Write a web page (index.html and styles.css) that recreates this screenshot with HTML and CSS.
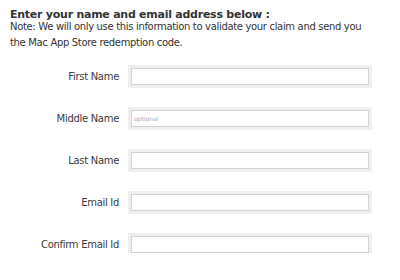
FILE: index.html
```html
<!DOCTYPE html>
<html>
<head>
<meta charset="utf-8">
<link rel="stylesheet" href="styles.css">
</head>
<body>
<div class="page">
  <h1 class="title">Enter your name and email address below :</h1>
  <p class="note">Note: We will only use this information to validate your claim and send you the Mac App Store redemption code.</p>
  <form class="form">
    <div class="row"><label class="label">First Name</label><input class="field" type="text"></div>
    <div class="row"><label class="label">Middle Name</label><input class="field" type="text" placeholder="optional"></div>
    <div class="row"><label class="label">Last Name</label><input class="field" type="text"></div>
    <div class="row"><label class="label">Email Id</label><input class="field" type="text"></div>
    <div class="row"><label class="label">Confirm Email Id</label><input class="field" type="text"></div>
  </form>
</div>
</body>
</html>
```
FILE: styles.css
```css
html, body {
  margin: 0;
  padding: 0;
  background: #ffffff;
}
.page {
  padding: 9px 0 0 10px;
  font-family: "DejaVu Sans", Verdana, sans-serif;
  color: #333333;
}
.title {
  margin: 0;
  font-size: 11px;
  line-height: 12px;
  font-weight: bold;
  letter-spacing: -0.25px;
  color: #333333;
}
.note {
  margin: -2px 0 0 0;
  font-size: 10px;
  line-height: 16px;
  letter-spacing: -0.33px;
  color: #333333;
  width: 362px;
}
.form {
  margin-top: 17px;
  display: flex;
  flex-direction: column;
  gap: 25px;
}
.row {
  display: flex;
  align-items: center;
}
.label {
  width: 109px;
  text-align: right;
  font-size: 10px;
  letter-spacing: -0.3px;
  color: #3a3a3a;
  margin-right: 12px;
}
.field {
  box-sizing: border-box;
  width: 238px;
  height: 17px;
  margin: 0;
  padding: 0 0 0 2px;
  border: 1px solid #d2d2d2;
  box-shadow: 0 0 0 3px #efefef;
  background: #ffffff;
  font-family: "DejaVu Sans", Verdana, sans-serif;
  font-size: 6px;
  outline: none;
}
.field::placeholder {
  color: #a8a8a8;
}
```
